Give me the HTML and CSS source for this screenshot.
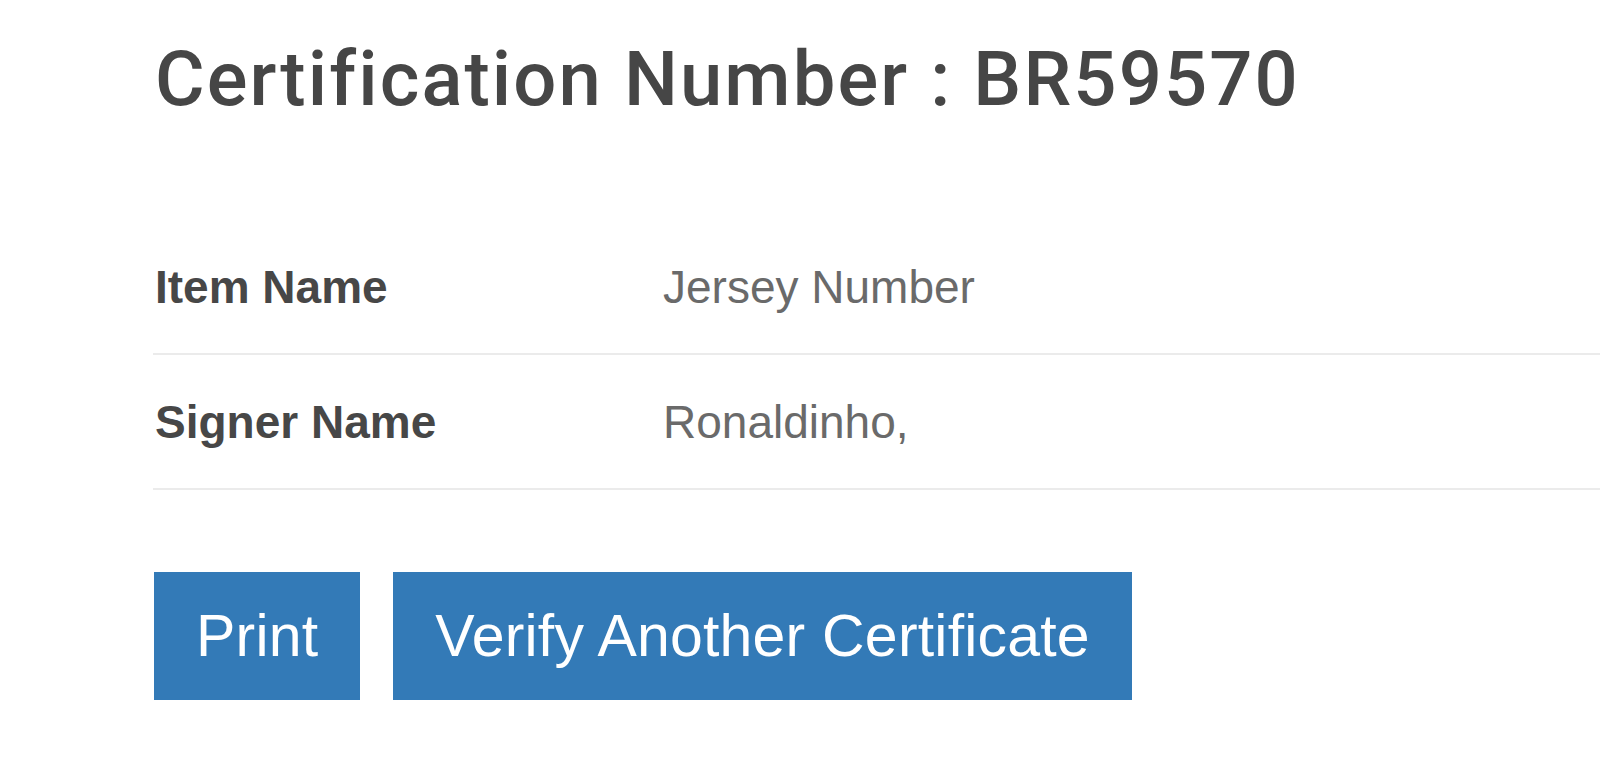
FILE: index.html
```html
<!DOCTYPE html>
<html lang="en">
<head>
<meta charset="utf-8">
<title>Certificate Verification</title>
<link rel="stylesheet" href="styles.css">
</head>
<body>
<main class="page">
  <h1 class="cert-title">Certification Number : BR59570</h1>
  <table class="details">
    <tbody>
      <tr>
        <th class="label">Item Name</th>
        <td class="value">Jersey Number</td>
      </tr>
      <tr>
        <th class="label">Signer Name</th>
        <td class="value">Ronaldinho,</td>
      </tr>
    </tbody>
  </table>
  <div class="actions">
    <button class="btn">Print</button>
    <button class="btn">Verify Another Certificate</button>
  </div>
</main>
</body>
</html>
```

FILE: styles.css
```css
html, body {
  margin: 0;
  padding: 0;
  background: #ffffff;
}

.page {
  padding: 35px 0 0 153px;
  font-family: "Liberation Sans", Arial, sans-serif;
}

.cert-title {
  margin: 0 0 97px 2px;
  font-family: Roboto, "Liberation Sans", sans-serif;
  font-weight: 500;
  font-size: 76px;
  line-height: 88px;
  color: #464646;
  letter-spacing: 2.1px;
}

.details {
  width: 100%;
  border-collapse: collapse;
}

.details tr {
  border-bottom: 2px solid #ebebeb;
}

.label,
.value {
  padding: 34px 0 33px 0;
  font-size: 46px;
  line-height: 66px;
  text-align: left;
  vertical-align: middle;
}

.label {
  width: 508px;
  padding-left: 2px;
  font-weight: bold;
  color: #474747;
}

.value {
  font-weight: normal;
  color: #6a6a6a;
}

.actions {
  display: flex;
  gap: 33px;
  margin-top: 82px;
  padding-left: 1px;
}

.btn {
  margin: 0;
  border: 0;
  border-radius: 0;
  background: #337ab7;
  color: #ffffff;
  font-family: "Liberation Sans", Arial, sans-serif;
  font-size: 59px;
  line-height: 78px;
  letter-spacing: 0.2px;
  padding: 25px 42px;
  cursor: pointer;
}
```
